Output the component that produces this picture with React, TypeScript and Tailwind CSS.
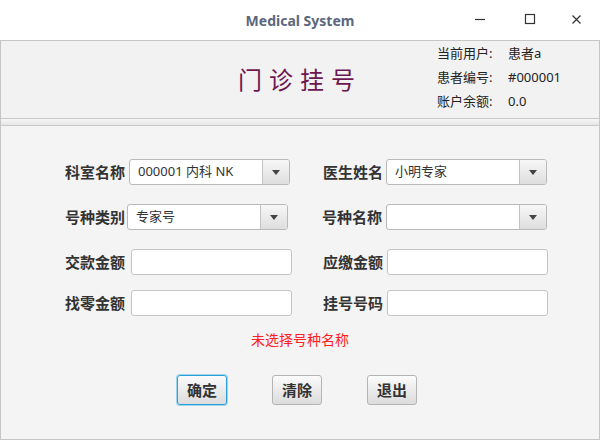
import { ReactNode } from 'react'

const CJK = "font-['Noto_Sans','Noto_Sans_CJK_SC',sans-serif]"

function Label({ children }: { children: ReactNode }) {
  return (
    <span className="w-[60px] shrink-0 text-[15px] font-bold text-[#333] leading-none whitespace-nowrap">
      {children}
    </span>
  )
}

function Combo({ value }: { value?: string }) {
  return (
    <div className="flex h-[26px] w-[161px] overflow-hidden rounded-[3px] border border-[#b9b9b9] bg-white">
      <div className="flex flex-1 items-center pl-[8px] text-[13px] text-[#333] whitespace-nowrap">{value}</div>
      <div className="flex w-[27px] items-center justify-center border-l border-[#c4c4c4] bg-gradient-to-b from-[#f7f7f7] to-[#dedede]">
        <span className="h-0 w-0 border-x-[4px] border-t-[5px] border-x-transparent border-t-[#444]" />
      </div>
    </div>
  )
}

function Input() {
  return <div className="h-[26px] w-[161px] rounded-[3px] border border-[#c4c4c4] bg-white" />
}

function Field({ label, children, gap }: { label: string; children: ReactNode; gap: string }) {
  return (
    <div className={`flex items-center ${gap}`}>
      <Label>{label}</Label>
      {children}
    </div>
  )
}

function Button({ text, focused }: { text: string; focused?: boolean }) {
  return (
    <div
      className={`flex h-[30px] w-[50px] items-center justify-center rounded-[3px] border bg-gradient-to-b from-[#fbfbfb] to-[#dcdcdc] text-[15px] font-bold text-[#333] ${
        focused ? 'border-[#2b9fd8] ring-1 ring-[#9dd3ee]' : 'border-[#b4b4b4]'
      }`}
    >
      {text}
    </div>
  )
}

export default function App() {
  return (
    <div className={`flex h-[440px] w-[600px] flex-col bg-white ${CJK}`}>
      {/* title bar */}
      <div className="relative flex h-[40px] shrink-0 items-center justify-center">
        <span className="text-[14px] font-bold text-[#5c677c]">Medical System</span>
        <div className="absolute right-0 top-0 flex h-[40px] items-center">
          <svg width="44" height="40" viewBox="0 0 44 40"><path d="M7 19.5h10" stroke="#333" strokeWidth="1.2" /></svg>
          <svg width="44" height="40" viewBox="0 0 44 40"><rect x="13.5" y="14.5" width="9" height="9" fill="none" stroke="#333" strokeWidth="1.2" /></svg>
          <svg width="44" height="40" viewBox="0 0 44 40"><path d="M16.5 15.5l8 8M24.5 15.5l-8 8" stroke="#333" strokeWidth="1.2" /></svg>
        </div>
      </div>

      {/* window body */}
      <div className="flex flex-1 flex-col border-x border-b border-t border-[#c6c6c6]">
        {/* header panel */}
        <div className="relative flex h-[77px] shrink-0 items-center justify-center bg-[#f2f2f2]">
          <span className="pt-[1px] text-[24px] tracking-[7px] text-[#6e1650]">门诊挂号</span>
          <div className="absolute left-[436px] top-[4px] flex flex-col gap-[7px] text-[13px] leading-[17px] text-[#222]">
            <div className="flex"><span className="w-[71px]">当前用户:</span><span>患者a</span></div>
            <div className="flex"><span className="w-[71px]">患者编号:</span><span>#000001</span></div>
            <div className="flex"><span className="w-[71px]">账户余额:</span><span>0.0</span></div>
          </div>
        </div>
        <div className="h-[8px] shrink-0 border-y border-[#c8c8c8] bg-gradient-to-b from-[#f6f6f6] to-[#e6e6e6]" />

        {/* form */}
        <div className="flex flex-1 flex-col bg-[#f4f4f4] pt-[33px]">
          <div className="flex flex-col pl-[64px]">
            <div className="flex gap-[33px]">
              <Field label="科室名称" gap="gap-[4px]"><Combo value="000001 内科 NK" /></Field>
              <Field label="医生姓名" gap="gap-[3px]"><Combo value="小明专家" /></Field>
            </div>
            <div className="mt-[19px] flex gap-[34px]">
              <Field label="号种类别" gap="gap-[2px]"><Combo value="专家号" /></Field>
              <Field label="号种名称" gap="gap-[4px]"><Combo /></Field>
            </div>
            <div className="mt-[19px] flex gap-[31px]">
              <Field label="交款金额" gap="gap-[6px]"><Input /></Field>
              <Field label="应缴金额" gap="gap-[4px]"><Input /></Field>
            </div>
            <div className="mt-[15px] flex gap-[31px]">
              <Field label="找零金额" gap="gap-[6px]"><Input /></Field>
              <Field label="挂号号码" gap="gap-[4px]"><Input /></Field>
            </div>
          </div>

          <div className="mt-[15px] text-center text-[14px] leading-[18px] text-[#ff2020]">未选择号种名称</div>

          <div className="mt-[26px] flex justify-center gap-[45px] pr-[6px]">
            <Button text="确定" focused />
            <Button text="清除" />
            <Button text="退出" />
          </div>
        </div>
      </div>
    </div>
  )
}
